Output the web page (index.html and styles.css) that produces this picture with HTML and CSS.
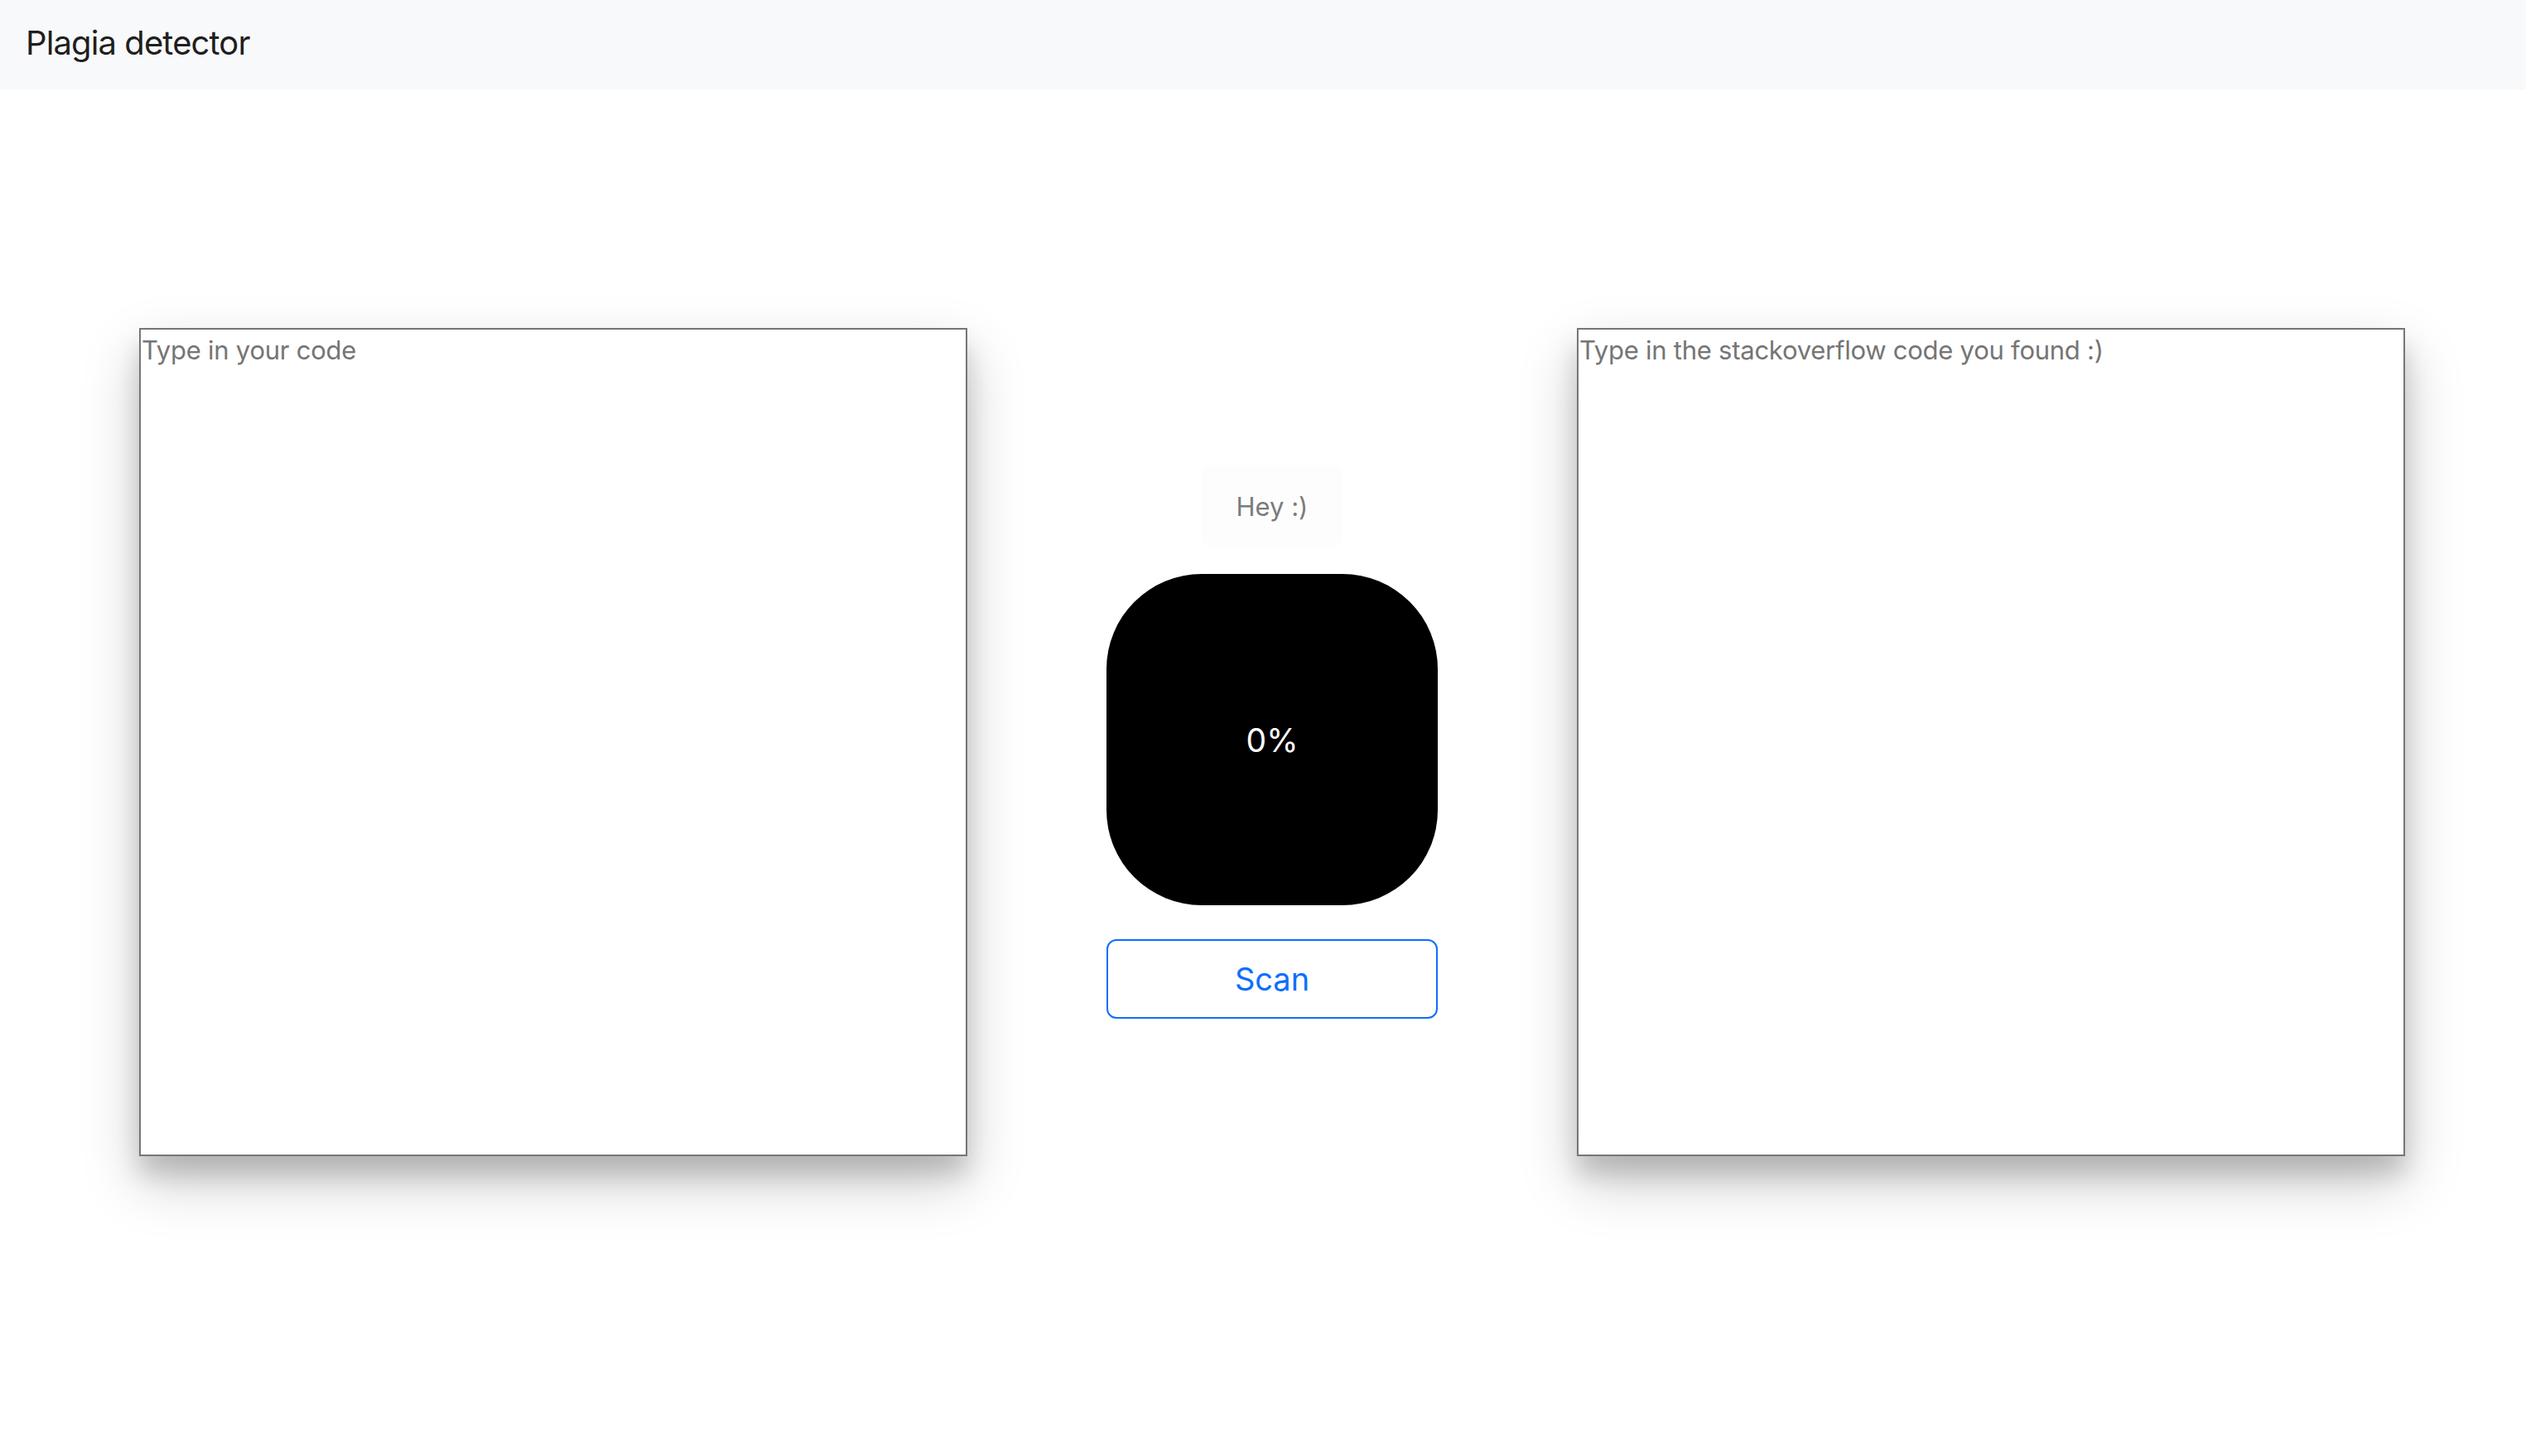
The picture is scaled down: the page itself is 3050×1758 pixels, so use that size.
FILE: index.html
```html
<!DOCTYPE html>
<html lang="en">
<head>
<meta charset="utf-8">
<title>Plagia detector</title>
<link rel="stylesheet" href="styles.css">
</head>
<body>
<nav class="navbar">
  <span class="brand">Plagia detector</span>
</nav>
<main class="workspace">
  <textarea class="code-box" placeholder="Type in your code"></textarea>
  <div class="center-col">
    <div class="hey">Hey :)</div>
    <div class="score">0%</div>
    <button class="scan-btn" type="button">Scan</button>
  </div>
  <textarea class="code-box" placeholder="Type in the stackoverflow code you found :)"></textarea>
</main>
</body>
</html>
```
FILE: styles.css
```css
html, body {
  margin: 0;
  padding: 0;
  background: #ffffff;
  font-family: Inter, "Liberation Sans", Arial, sans-serif;
}

body {
  min-height: 100vh;
}

.navbar {
  height: 108px;
  background: #f8f9fa;
  display: flex;
  align-items: center;
  padding-left: 31px;
  box-sizing: border-box;
}

.brand {
  font-size: 40px;
  color: rgba(0, 0, 0, 0.9);
  line-height: 1;
  letter-spacing: -0.9px;
  position: relative;
  top: -2px;
}

.workspace {
  display: flex;
  align-items: center;
  gap: 168px;
  padding-left: 168px;
  margin-top: 288px;
  padding-bottom: 300px;
}

.code-box {
  width: 1000px;
  height: 1000px;
  box-sizing: border-box;
  border: 2px solid #767676;
  padding: 6px 1px 2px;
  margin: 0;
  resize: none;
  font-family: Inter, "Liberation Sans", Arial, sans-serif;
  font-size: 31px;
  letter-spacing: -0.25px;
  color: #212529;
  background: #fff;
  outline: none;
  box-shadow: 0 30px 64px rgba(0, 0, 0, 0.22), 0 22px 26px rgba(0, 0, 0, 0.14);
}

.code-box::placeholder {
  color: #757575;
}

.center-col {
  width: 400px;
  display: flex;
  flex-direction: column;
  align-items: center;
}

.hey {
  width: 170px;
  height: 98px;
  box-sizing: border-box;
  display: flex;
  align-items: center;
  justify-content: center;
  background: #fdfdfd;
  border-radius: 10px;
  font-size: 31px;
  color: #7b7b7b;
}

.score {
  margin-top: 33px;
  width: 400px;
  height: 400px;
  border-radius: 115px;
  background: #000;
  color: #fff;
  display: flex;
  align-items: center;
  justify-content: center;
  font-size: 39px;
}

.scan-btn {
  margin-top: 41px;
  width: 400px;
  height: 96px;
  box-sizing: border-box;
  border: 2px solid #0d6efd;
  border-radius: 12px;
  background: #fff;
  color: #0d6efd;
  font-family: Inter, "Liberation Sans", Arial, sans-serif;
  font-size: 38px;
  cursor: pointer;
}
```
